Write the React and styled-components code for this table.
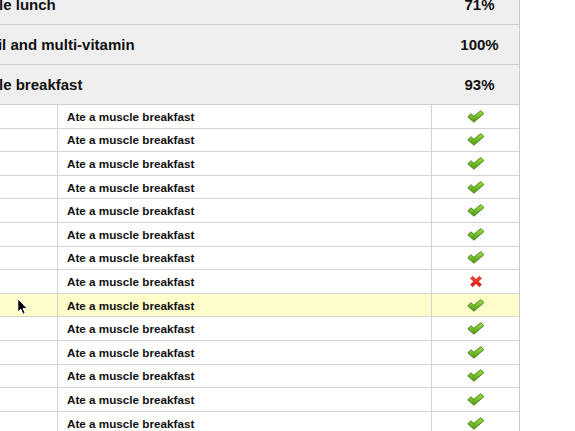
import React from "react";
import styled, { createGlobalStyle } from "styled-components";

const GlobalStyle = createGlobalStyle`
  html, body { margin: 0; padding: 0; background: #fff; }
  body { font-family: "Liberation Sans", Arial, Helvetica, sans-serif; color: #111; }
`;

const Page = styled.div`
  position: relative;
  width: 575px;
  height: 431px;
  overflow: hidden;
  background: #fff;
`;

const Table = styled.div`
  margin: -15px 0 0 -91px;
  width: 611px;
  border-right: 1px solid #c9c9c9;
  box-sizing: border-box;
`;

const SummaryRow = styled.div`
  display: flex;
  align-items: center;
  height: 40px;
  box-sizing: border-box;
  background: #efefef;
  border-bottom: 1px solid #cdcdcd;
  font-size: 15px;
  font-weight: bold;
  color: #111;
`;

const SummaryLabel = styled.div`
  flex: 1;
  padding-left: 10px;
  white-space: nowrap;
`;

const SummaryValue = styled.div`
  width: 88px;
  padding-left: 9px;
  box-sizing: border-box;
  text-align: center;
`;

const DetailRow = styled.div`
  display: grid;
  grid-template-columns: 149px 374px 1fr;
  height: 23.6px;
  box-sizing: border-box;
  border-bottom: 1px solid #d3d3d3;
  background: ${(p) => (p.$highlight ? "#fdfdc9" : "#fff")};
`;

const Cell = styled.div`
  display: flex;
  align-items: center;
  box-sizing: border-box;
  border-right: ${(p) => (p.$last ? "none" : "1px solid #d3d3d3")};
  justify-content: ${(p) => (p.$center ? "center" : "flex-start")};
  padding-left: ${(p) => (p.$center ? "0" : "9px")};
  font-size: 11.7px;
  font-weight: bold;
  white-space: nowrap;
`;

const Cursor = styled.svg`
  position: absolute;
  left: 17px;
  top: 298px;
`;

const CheckIcon = () => (
  <svg width="18" height="13" viewBox="0 0 18 13">
    <defs>
      <linearGradient id="gck" x1="0" y1="0" x2="0" y2="1">
        <stop offset="0" stopColor="#a2e24e" />
        <stop offset="1" stopColor="#4a9810" />
      </linearGradient>
    </defs>
    <path
      d="M0.8 6.8 L3.9 3.8 L6.9 6.3 L13.8 0.6 L16.9 3.6 L6.9 12.2 Z"
      fill="url(#gck)"
      stroke="#3e7d0e"
      strokeWidth="0.9"
      strokeLinejoin="round"
    />
  </svg>
);

const CrossIcon = () => (
  <svg width="14" height="13" viewBox="0 0 14 13">
    <defs>
      <linearGradient id="gx" x1="0" y1="0" x2="0" y2="1">
        <stop offset="0" stopColor="#ff4a3a" />
        <stop offset="1" stopColor="#d7140c" />
      </linearGradient>
    </defs>
    <path
      d="M1.5 3.4 L3.6 1.2 L7 4.4 L10.4 1.2 L12.5 3.4 L9.2 6.5 L12.5 9.6 L10.4 11.8 L7 8.6 L3.6 11.8 L1.5 9.6 L4.8 6.5 Z"
      fill="url(#gx)"
      stroke="#c41008"
      strokeWidth="0.6"
      strokeLinejoin="round"
    />
  </svg>
);

const summaries = [
  { label: "Ate a muscle lunch", value: "71%" },
  { label: "Took fish oil and multi-vitamin", value: "100%" },
  { label: "Ate a muscle breakfast", value: "93%" },
];

const details = Array.from({ length: 14 }, (_, i) => ({
  text: "Ate a muscle breakfast",
  ok: i !== 7,
  highlight: i === 8,
}));

export default function App() {
  return (
    <>
      <GlobalStyle />
      <Page>
        <Table>
          {summaries.map((s) => (
            <SummaryRow key={s.label}>
              <SummaryLabel>{s.label}</SummaryLabel>
              <SummaryValue>{s.value}</SummaryValue>
            </SummaryRow>
          ))}
          {details.map((d, i) => (
            <DetailRow key={i} $highlight={d.highlight}>
              <Cell />
              <Cell>{d.text}</Cell>
              <Cell $center $last>
                {d.ok ? <CheckIcon /> : <CrossIcon />}
              </Cell>
            </DetailRow>
          ))}
        </Table>
        <Cursor width="12" height="18" viewBox="0 0 12 18">
          <path
            d="M0.8 0.8 L0.8 14 L3.8 11.2 L6 16.2 L8.2 15.2 L6.1 10.4 L10.2 10.4 Z"
            fill="#000"
            stroke="#fff"
            strokeWidth="1"
            strokeLinejoin="round"
          />
        </Cursor>
      </Page>
    </>
  );
}
